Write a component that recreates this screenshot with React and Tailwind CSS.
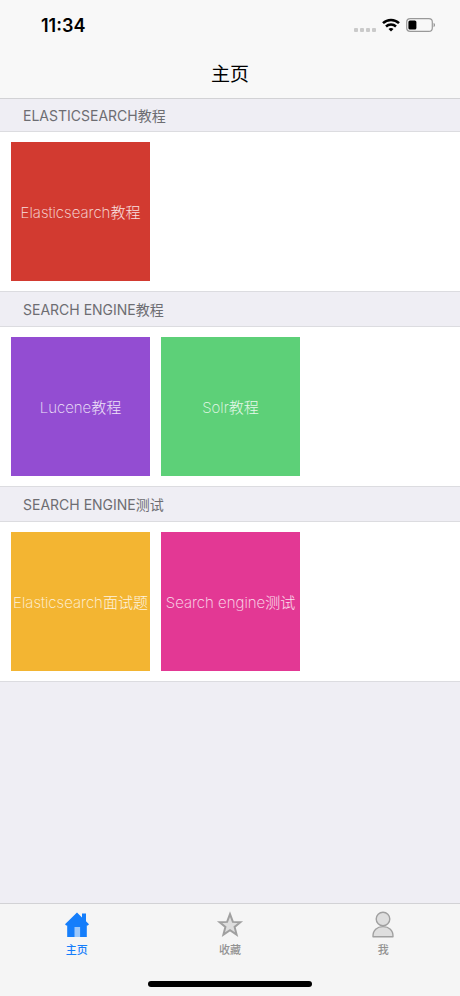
const sections = [
  {
    title: 'ELASTICSEARCH教程',
    tiles: [{ label: 'Elasticsearch教程', color: 'bg-[#d23a30]' }],
  },
  {
    title: 'SEARCH ENGINE教程',
    tiles: [
      { label: 'Lucene教程', color: 'bg-[#934dd2]' },
      { label: 'Solr教程', color: 'bg-[#5dd078]' },
    ],
  },
  {
    title: 'SEARCH ENGINE测试',
    tiles: [
      { label: 'Elasticsearch面试题', color: 'bg-[#f3b532]' },
      { label: 'Search engine测试', color: 'bg-[#e33894]' },
    ],
  },
];

function WifiIcon() {
  return (
    <svg width="18" height="14" viewBox="0 0 18 14" fill="none" stroke="#000" strokeWidth="2.5" aria-hidden="true">
      <path d="M1 5.2C5.4 0.9 12.6 0.9 17 5.2" />
      <path d="M4 8.5C6.8 5.9 11.2 5.9 14 8.5" />
      <path d="M6.5 10.9C8 9.6 10 9.6 11.5 10.9L9 13.4Z" fill="#000" stroke="none" />
    </svg>
  );
}

function BatteryIcon() {
  return (
    <svg width="30" height="14" viewBox="0 0 30 14" aria-hidden="true">
      <rect x="0.7" y="0.7" width="25.6" height="12.6" rx="3.4" fill="none" stroke="#999" strokeWidth="1.2" />
      <rect x="2.4" y="2.4" width="8" height="9.2" rx="1.6" fill="#000" />
      <path d="M27.6 4.8C29.4 5.5 29.4 8.5 27.6 9.2Z" fill="#888" />
    </svg>
  );
}

function HomeIcon() {
  return (
    <svg width="28" height="28" viewBox="0 0 28 28" aria-hidden="true">
      <path d="M14 1.6L2 13.2L3.2 14.6H4.2V26H23.8V14.6H24.8L26 13.2L23 10.3V2.6H19V6.4Z" fill="#157efb" />
      <rect x="11.5" y="16" width="5.6" height="10" fill="#9cc8fb" />
    </svg>
  );
}

function StarIcon() {
  return (
    <svg width="28" height="28" viewBox="0 0 28 28" aria-hidden="true">
      <path d="M14 3.2L16.9 10.9L24.4 11.2L18.6 15.9L20.6 23.6L14 19.2L7.4 23.6L9.4 15.9L3.6 11.2L11.1 10.9Z" fill="#dedede" stroke="#a0a0a0" strokeWidth="2" />
    </svg>
  );
}

function PersonIcon() {
  return (
    <svg width="28" height="28" viewBox="0 0 28 28" fill="#dedede" stroke="#a0a0a0" strokeWidth="1.4" aria-hidden="true">
      <circle cx="14" cy="8" r="6.8" />
      <path d="M4 25.8C3.6 19 8.2 15.6 14 15.6S24.4 19 24 25.8Z" strokeLinejoin="round" />
    </svg>
  );
}

const tabs = [
  { label: '主页', Icon: HomeIcon, active: true },
  { label: '收藏', Icon: StarIcon, active: false },
  { label: '我', Icon: PersonIcon, active: false },
];

export default function App() {
  return (
    <div className="flex min-h-screen flex-col bg-[#efeef4] font-['Inter','Noto_Sans_CJK_SC',sans-serif] text-black">
      <header className="border-b border-[#d2d2d5] bg-[#f8f8f8]">
        <div className="flex h-[50px] items-center justify-between pr-6 pl-[41px]">
          <time className="pt-[2px] text-[18px] leading-6 font-semibold">11:34</time>
          <div className="flex items-center gap-[6px]">
            <div className="flex gap-[2px] pt-[10px]">
              <span className="size-1 rounded-[1px] bg-[#cacaca]" />
              <span className="size-1 rounded-[1px] bg-[#cacaca]" />
              <span className="size-1 rounded-[1px] bg-[#cacaca]" />
              <span className="size-1 rounded-[1px] bg-[#cacaca]" />
            </div>
            <WifiIcon />
            <BatteryIcon />
          </div>
        </div>
        <h1 className="flex h-12 items-center justify-center pt-[2px] text-[19px] leading-6 font-normal">主页</h1>
      </header>

      <main className="grow">
        {sections.map((section, i) => (
          <section key={section.title}>
            <h2
              className={`flex items-center border-b border-[#dcdce0] px-[23px] pt-[2px] text-[14px] leading-5 text-[#6d6d72] ${
                i === 0 ? 'h-[33px]' : 'h-[35px]'
              }`}
            >
              {section.title}
            </h2>
            <div className="flex gap-[11px] border-b border-[#dcdce0] bg-white px-[11px] pt-[10px] pb-[10px]">
              {section.tiles.map((tile) => (
                <button
                  key={tile.label}
                  type="button"
                  className={`flex size-[139px] shrink-0 items-center justify-center overflow-hidden pt-[2px] text-[15px] leading-5 font-extralight whitespace-nowrap text-white/85 ${tile.color}`}
                >
                  {tile.label}
                </button>
              ))}
            </div>
          </section>
        ))}
      </main>

      <footer className="border-t border-[#d2d2d5] bg-[#f5f5f5]">
        <nav className="grid h-[70px] grid-cols-3">
          {tabs.map(({ label, Icon, active }) => (
            <button
              key={label}
              type="button"
              className={`flex flex-col items-center pt-[7px] text-[11px] leading-4 font-medium ${
                active ? 'text-[#157efb]' : 'text-[#929292]'
              }`}
            >
              <Icon />
              <span className="pt-[3px]">{label}</span>
            </button>
          ))}
        </nav>
        <div className="flex h-[22px] justify-center pt-[7px]">
          <div className="h-[6px] w-[164px] rounded-full bg-black" />
        </div>
      </footer>
    </div>
  );
}
